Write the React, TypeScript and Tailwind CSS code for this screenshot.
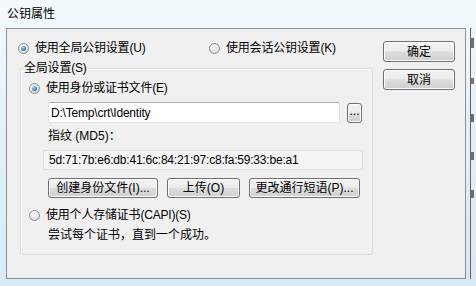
import type { ReactNode } from "react"

const font = { fontFamily: '"Liberation Sans", "Noto Sans CJK SC", sans-serif' }

function Radio({ checked }: { checked?: boolean }) {
  return (
    <span className="flex h-[11px] w-[11px] shrink-0 items-center justify-center rounded-full border border-[#8b8b8b] bg-[radial-gradient(circle_at_35%_30%,#ffffff_0%,#e6e6e6_55%,#c9c9c9_100%)]">
      {checked && (
        <span className="h-[5px] w-[5px] rounded-full bg-[radial-gradient(circle_at_35%_30%,#a6dcfa_0%,#3a8ad0_55%,#174d86_100%)]" />
      )}
    </span>
  )
}

function RadioLabel({ checked, children, className = "" }: { checked?: boolean; children: ReactNode; className?: string }) {
  return (
    <div className={`flex h-[16px] items-center gap-[6px] ${className}`}>
      <Radio checked={checked} />
      <span className="whitespace-nowrap leading-[16px] tracking-[-0.2px]">{children}</span>
    </div>
  )
}

function Button({ children, className = "" }: { children: ReactNode; className?: string }) {
  return (
    <div
      className={`flex shrink-0 items-center justify-center whitespace-nowrap rounded-[3px] border border-[#707070] bg-[linear-gradient(180deg,#f4f4f4_0%,#ebebeb_48%,#dddddd_52%,#cfcfcf_100%)] text-[12px] leading-none shadow-[inset_0_0_0_1px_#fbfbfb] ${className}`}
    >
      {children}
    </div>
  )
}

export default function App() {
  return (
    <div
      style={font}
      className="relative h-[286px] w-[476px] overflow-hidden bg-[linear-gradient(180deg,#f4fafd_0%,#e4f1f9_40%,#d6eaf6_100%)] text-[12px] text-black"
    >
      {/* title bar */}
      <div className="flex h-[28px] items-center pl-[7px] pb-[1px]">
        <span className="leading-[16px]">公钥属性</span>
      </div>

      <div className="flex">
        {/* client area */}
        <div className="ml-[6px] flex h-[251px] w-[460px] border border-[#8c9196] bg-[#f0f0f0]">
          <div className="flex w-[367px] flex-col pl-[11px]">
            <div className="mt-[11px] flex">
              <RadioLabel checked className="w-[191px]">使用全局公钥设置(U)</RadioLabel>
              <RadioLabel>使用会话公钥设置(K)</RadioLabel>
            </div>

            <div className="relative ml-[2px] mt-[12px] flex h-[187px] w-[353px] flex-col rounded-[3px] border border-[#d5dfe5] shadow-[inset_1px_1px_0_#ffffff]">
              <span className="absolute -top-[9px] left-[2px] bg-[#f0f0f0] px-[1px] leading-[16px] tracking-[-0.2px]">全局设置(S)</span>

              <RadioLabel checked className="ml-[8px] mt-[11px]">使用身份或证书文件(E)</RadioLabel>

              <div className="ml-[27px] mt-[6px] flex items-start gap-[7px]">
                <div className="flex h-[21px] w-[292px] items-center rounded-[2px] border border-[#abadb3] border-b-[#e3e9ef] border-l-[#e2e3ea] border-r-[#dbdfe6] bg-white pl-[2px] tracking-[-0.2px]">
                  D:\Temp\crt\Identity
                </div>
                <Button className="mt-[1px] h-[20px] w-[15px] pb-[4px] text-[11px]">...</Button>
              </div>

              <div className="ml-[27px] mt-[5px] leading-[16px]">指纹 (MD5)：</div>

              <div className="ml-[22px] mt-[6px] flex h-[20px] w-[320px] items-center rounded-[2px] border border-[#dcdfe3] bg-[#f4f4f4] pl-[5px] tracking-[-0.2px]">
                5d:71:7b:e6:db:41:6c:84:21:97:c8:fa:59:33:be:a1
              </div>

              <div className="ml-[27px] mt-[8px] flex gap-[9px]">
                <Button className="h-[20px] w-[110px]">创建身份文件(I)...</Button>
                <Button className="h-[20px] w-[73px]">上传(O)</Button>
                <Button className="h-[20px] w-[111px]">更改通行短语(P)...</Button>
              </div>

              <RadioLabel className="ml-[8px] mt-[9px]">使用个人存储证书(CAPI)(S)</RadioLabel>

              <div className="ml-[27px] mt-[4px] leading-[16px]">尝试每个证书，直到一个成功。</div>
            </div>
          </div>

          <div className="ml-[9px] mt-[12px] flex flex-col gap-[7px]">
            <Button className="h-[21px] w-[72px] shadow-[inset_0_0_0_1px_#e8f4fb]">确定</Button>
            <Button className="h-[21px] w-[72px]">取消</Button>
          </div>
        </div>

        {/* right edge of the frame and the window behind */}
        <div className="ml-[4px] h-[251px] w-[1px] bg-[#5f656b]" />
        <div className="flex h-[251px] flex-1 flex-col gap-[30px] bg-[linear-gradient(180deg,#eef3f6_0%,#dfe8ee_100%)] pt-[10px]">
          <div className="h-[10px] w-[3px] bg-[#6a6f75]" />
          <div className="h-[6px] w-[3px] bg-[#8a7060]" />
          <div className="h-[8px] w-[3px] bg-[#6a6f75]" />
          <div className="h-[8px] w-[3px] bg-[#6a6f75]" />
          <div className="h-[8px] w-[3px] bg-[#6a6f75]" />
        </div>
      </div>
    </div>
  )
}
